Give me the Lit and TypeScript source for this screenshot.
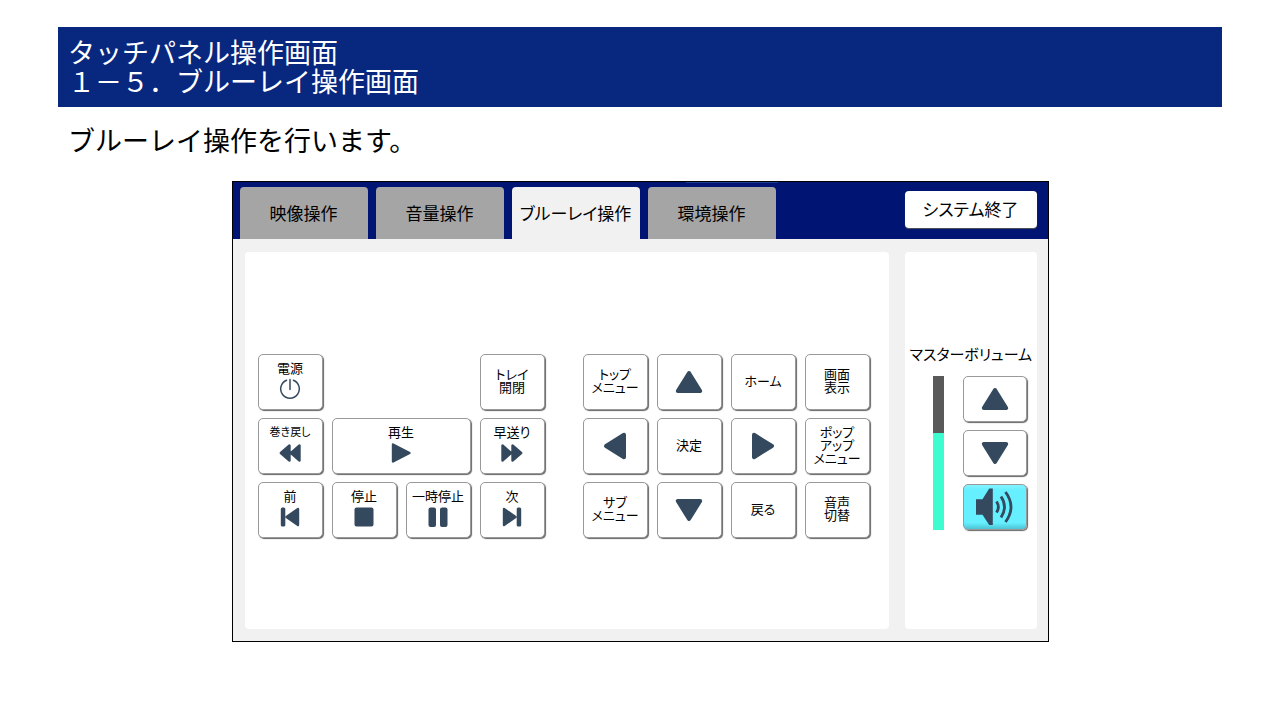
import { LitElement, html, css, svg, nothing, type TemplateResult } from "lit";
import { customElement, property, state } from "lit/decorators.js";
import { classMap } from "lit/directives/class-map.js";

type IconName =
  | "power" | "rewind" | "play" | "forward" | "prev" | "stop" | "pause" | "next"
  | "up" | "down" | "left" | "right" | "speaker";

interface Icon { w: number; h: number; body: TemplateResult }

const ICONS: Record<IconName, Icon> = {
  power: { w: 22, h: 22, body: svg`<path class="line" d="M7.600 2.200A9.300 9.300 0 1 0 14.400 2.200M11 1.500V11.500"/>` },
  rewind: { w: 24, h: 22, body: svg`<path class="solid" d="M2.800 11L11.500 3.500V18.500ZM13 11L21.500 3.500V18.500Z"/>` },
  forward: { w: 24, h: 22, body: svg`<path class="solid" d="M21.200 11L12.500 3.500V18.500ZM11 11L2.500 3.500V18.500Z"/>` },
  play: { w: 22, h: 22, body: svg`<path class="solid" d="M3 2.500L19.500 11L3 19.500Z"/>` },
  prev: { w: 20, h: 22, body: svg`<path class="solid" d="M18 3L6.500 11L18 19Z"/><rect x="0.800" y="1.500" width="4.500" height="19" rx="1.500"/>` },
  next: { w: 20, h: 22, body: svg`<path class="solid" d="M2 3L13.500 11L2 19Z"/><rect x="14.700" y="1.500" width="4.500" height="19" rx="1.500"/>` },
  stop: { w: 22, h: 22, body: svg`<rect x="1.500" y="1.500" width="19" height="19" rx="2"/>` },
  pause: { w: 20, h: 22, body: svg`<rect x="0.500" y="1.500" width="7.500" height="19.500" rx="2"/><rect x="12" y="1.500" width="7.500" height="19.500" rx="2"/>` },
  up: { w: 28, h: 24, body: svg`<path class="fat" d="M14 3L25.200 21H2.800Z"/>` },
  down: { w: 28, h: 24, body: svg`<path class="fat" d="M14 21L2.800 3H25.200Z"/>` },
  left: { w: 24, h: 28, body: svg`<path class="fat" d="M3 14L21 2.800V25.200Z"/>` },
  right: { w: 24, h: 28, body: svg`<path class="fat" d="M21 14L3 25.200V2.800Z"/>` },
  speaker: {
    w: 38, h: 38,
    body: svg`<path d="M0 11.300H6.500L13.200 0.500H16.800V37H13.200L6.500 26.700H0Z"/>
      <path class="wave" d="M20.500 13.500Q24.200 19 20.500 24.500M25 8.500Q32 19 25 29.500M29.500 4Q40.500 19 29.500 34"/>`,
  },
};

@customElement("panel-icon")
export class PanelIcon extends LitElement {
  @property() name: IconName = "play";

  static styles = css`
    :host { display: block; flex: none; }
    svg { display: block; fill: #34495e; }
    .solid, .fat { stroke: #34495e; stroke-linejoin: round; }
    .solid { stroke-width: 2.400; }
    .fat { stroke-width: 4; }
    .line { fill: none; stroke: #34495e; stroke-width: 1.500; stroke-linecap: round; }
    .wave { fill: none; stroke: #34495e; stroke-width: 2.800; }
  `;

  render() {
    const icon = ICONS[this.name];
    return html`<svg width=${icon.w} height=${icon.h} viewBox="0 0 ${icon.w} ${icon.h}" aria-hidden="true">${icon.body}</svg>`;
  }
}

interface Key {
  lines?: string[];
  icon?: IconName;
  name?: string;
  wide?: boolean;
  small?: boolean;
}

const PLAYBACK: (Key | null)[] = [
  { lines: ["電源"], icon: "power" }, null, null, { lines: ["トレイ", "開閉"] },
  { lines: ["巻き戻し"], icon: "rewind", small: true },
  { lines: ["再生"], icon: "play", wide: true },
  { lines: ["早送り"], icon: "forward" },
  { lines: ["前"], icon: "prev" }, { lines: ["停止"], icon: "stop" },
  { lines: ["一時停止"], icon: "pause" }, { lines: ["次"], icon: "next" },
];

const NAVIGATION: Key[] = [
  { lines: ["トップ", "メニュー"] }, { icon: "up", name: "上" }, { lines: ["ホーム"] }, { lines: ["画面", "表示"] },
  { icon: "left", name: "左" }, { lines: ["決定"] }, { icon: "right", name: "右" }, { lines: ["ポップ", "アップ", "メニュー"] },
  { lines: ["サブ", "メニュー"] }, { icon: "down", name: "下" }, { lines: ["戻る"] }, { lines: ["音声", "切替"] },
];

const TABS = ["映像操作", "音量操作", "ブルーレイ操作", "環境操作"];

@customElement("app-root")
export class AppRoot extends LitElement {
  @state() private tab = 2;
  @state() private volume = 63;
  @state() private sound = true;

  static styles = css`
    :host {
      display: block;
      min-height: 100vh;
      box-sizing: border-box;
      padding: 27px 58px;
      background: #fff;
      color: #000;
      font-family: "Noto Sans CJK JP", sans-serif;
    }
    * { box-sizing: border-box; }
    button {
      margin: 0;
      padding: 0;
      font: inherit;
      color: inherit;
      cursor: pointer;
    }
    .title {
      margin: 0;
      padding: 10px 10px 12px;
      background: #08277f;
      color: #fff;
      font-size: 27px;
      font-weight: 400;
      line-height: 29px;
    }
    .title span { display: block; }
    .lead {
      margin: 0;
      padding: 13px 10px 21px;
      font-size: 27px;
      line-height: 40px;
    }
    .console {
      max-width: 817px;
      margin: 0 auto;
      border: 1px solid #000;
      background: #f1f1f1;
      font-feature-settings: "palt";
    }
    .bar {
      display: flex;
      justify-content: space-between;
      align-items: flex-start;
      padding: 5px 11px 0 7px;
      background: linear-gradient(#1d3a96, #1d3a96) 453px 0 / 92px 1px no-repeat #001473;
    }
    .tabs { display: flex; gap: 8px; }
    .tab {
      width: 128px;
      height: 52px;
      border: 0;
      border-radius: 4px 4px 0 0;
      background: #a5a5a5;
      font-size: 17px;
      line-height: 24px;
    }
    .tab.on { background: #f1f1f1; }
    .exit {
      width: 132px;
      height: 37px;
      margin-top: 4px;
      padding-bottom: 2px;
      border: 0;
      border-radius: 4px;
      background: #fff;
      box-shadow: 0 1px 1px #555;
      font-size: 17px;
      line-height: 24px;
    }
    .body {
      display: grid;
      grid-template-columns: 1fr 132px;
      gap: 16px;
      padding: 13px 11px 12px 12px;
    }
    .card { border-radius: 4px; background: #fff; }
    .keys {
      display: flex;
      justify-content: space-between;
      align-items: flex-start;
      padding: 102px 19px 91px 13px;
    }
    .pad {
      display: grid;
      grid-template-columns: repeat(4, 65px);
      grid-auto-rows: 56px;
      gap: 8px 9px;
    }
    .key {
      display: flex;
      flex-direction: column;
      align-items: center;
      justify-content: center;
      border: 1px solid #999;
      border-radius: 5px;
      background: #fff;
      box-shadow: 1px 1px 1px #666;
      font-size: 13px;
      line-height: 13px;
      white-space: nowrap;
    }
    .key.worded { padding-bottom: 4px; gap: 4px; }
    .key.small { font-size: 11px; }
    .key.wide { grid-column: span 2; }
    .text { display: block; }
    .line { display: block; }
    .side { padding: 90px 5px; }
    .label {
      margin: 0 0 10px;
      font-size: 15px;
      line-height: 24px;
      text-align: center;
      white-space: nowrap;
    }
    .volume {
      display: grid;
      grid-template-columns: 11px 64px;
      justify-content: end;
      gap: 19px;
      padding-right: 5px;
    }
    .meter {
      display: flex;
      align-items: flex-end;
      background: #595959;
    }
    .level { width: 100%; background: #3dfcd0; }
    .steps { display: grid; grid-auto-rows: 46px; gap: 8px; }
    .key.lit {
      background: linear-gradient(#85f2ff 0, #66efff 12%, #66efff 86%, #4cc3d4 100%);
    }
  `;

  private renderKey(key: Key | null) {
    if (!key) return html`<span></span>`;
    const classes = {
      key: true,
      worded: !!key.lines,
      wide: !!key.wide,
      small: !!key.small,
    };
    return html`<button type="button" class=${classMap(classes)} aria-label=${key.name ?? nothing}>
      ${key.lines ? html`<span class="text">${key.lines.map((l) => html`<span class="line">${l}</span>`)}</span>` : nothing}
      ${key.icon ? html`<panel-icon .name=${key.icon}></panel-icon>` : nothing}
    </button>`;
  }

  private step(delta: number) {
    this.volume = Math.max(0, Math.min(100, this.volume + delta));
  }

  render() {
    return html`
      <h1 class="title"><span>タッチパネル操作画面</span><span>１－５．ブルーレイ操作画面</span></h1>
      <p class="lead">ブルーレイ操作を行います。</p>
      <main class="console">
        <div class="bar">
          <div class="tabs" role="tablist">
            ${TABS.map((t, i) => html`<button
              type="button" role="tab" aria-selected=${i === this.tab}
              class=${classMap({ tab: true, on: i === this.tab })}
              @click=${() => (this.tab = i)}>${t}</button>`)}
          </div>
          <button type="button" class="exit">システム終了</button>
        </div>
        <div class="body">
          <section class="card keys">
            <div class="pad">${PLAYBACK.map((k) => this.renderKey(k))}</div>
            <div class="pad">${NAVIGATION.map((k) => this.renderKey(k))}</div>
          </section>
          <section class="card side">
            <p class="label" id="volume">マスターボリューム</p>
            <div class="volume">
              <div class="meter" role="meter" aria-labelledby="volume"
                aria-valuemin="0" aria-valuemax="100" aria-valuenow=${this.volume}>
                <div class="level" style="height:${this.volume}%"></div>
              </div>
              <div class="steps">
                <button type="button" class="key" aria-label="音量を上げる" @click=${() => this.step(5)}>
                  <panel-icon .name=${"up"}></panel-icon></button>
                <button type="button" class="key" aria-label="音量を下げる" @click=${() => this.step(-5)}>
                  <panel-icon .name=${"down"}></panel-icon></button>
                <button type="button" class=${classMap({ key: true, lit: this.sound })} aria-label="消音"
                  aria-pressed=${!this.sound} @click=${() => (this.sound = !this.sound)}>
                  <panel-icon .name=${"speaker"}></panel-icon></button>
              </div>
            </div>
          </section>
        </div>
      </main>
    `;
  }
}
